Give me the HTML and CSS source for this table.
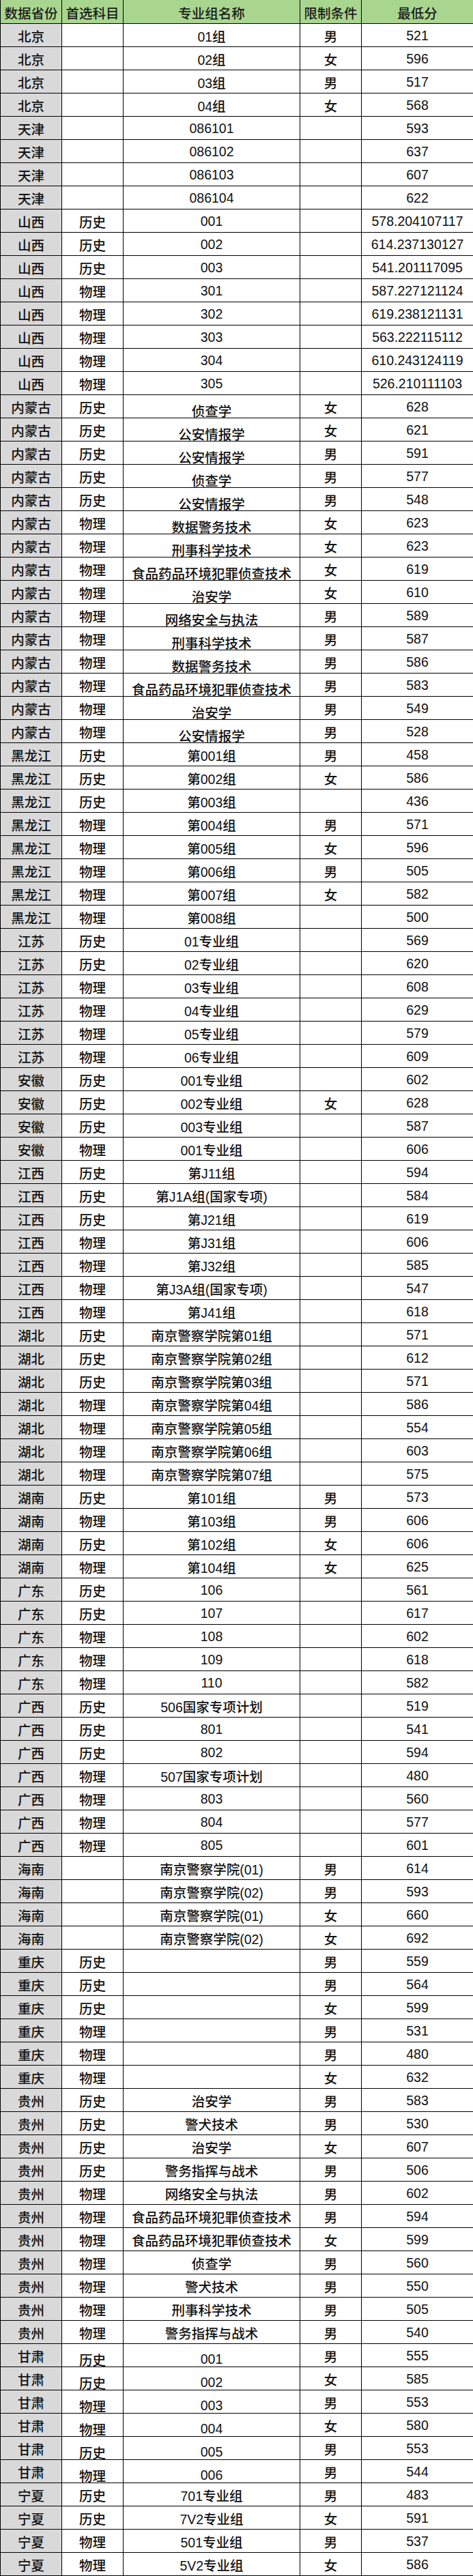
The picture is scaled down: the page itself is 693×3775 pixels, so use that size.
FILE: index.html
```html
<!DOCTYPE html>
<html lang="zh-CN">
<head>
<meta charset="utf-8">
<title>录取最低分</title>
<link rel="stylesheet" href="styles.css">
</head>
<body>
<div class="sheet">
<div class="c h">数据省份</div><div class="c h">首选科目</div><div class="c h">专业组名称</div><div class="c h">限制条件</div><div class="c h">最低分</div>

<div class="c p">北京</div><div class="c"></div><div class="c">01组</div><div class="c">男</div><div class="c">521</div>
<div class="c p">北京</div><div class="c"></div><div class="c">02组</div><div class="c">女</div><div class="c">596</div>
<div class="c p">北京</div><div class="c"></div><div class="c">03组</div><div class="c">男</div><div class="c">517</div>
<div class="c p">北京</div><div class="c"></div><div class="c">04组</div><div class="c">女</div><div class="c">568</div>
<div class="c p">天津</div><div class="c"></div><div class="c">086101</div><div class="c"></div><div class="c">593</div>
<div class="c p">天津</div><div class="c"></div><div class="c">086102</div><div class="c"></div><div class="c">637</div>
<div class="c p">天津</div><div class="c"></div><div class="c">086103</div><div class="c"></div><div class="c">607</div>
<div class="c p">天津</div><div class="c"></div><div class="c">086104</div><div class="c"></div><div class="c">622</div>
<div class="c p">山西</div><div class="c">历史</div><div class="c">001</div><div class="c"></div><div class="c">578.204107117</div>
<div class="c p">山西</div><div class="c">历史</div><div class="c">002</div><div class="c"></div><div class="c">614.237130127</div>
<div class="c p">山西</div><div class="c">历史</div><div class="c">003</div><div class="c"></div><div class="c">541.201117095</div>
<div class="c p">山西</div><div class="c">物理</div><div class="c">301</div><div class="c"></div><div class="c">587.227121124</div>
<div class="c p">山西</div><div class="c">物理</div><div class="c">302</div><div class="c"></div><div class="c">619.238121131</div>
<div class="c p">山西</div><div class="c">物理</div><div class="c">303</div><div class="c"></div><div class="c">563.222115112</div>
<div class="c p">山西</div><div class="c">物理</div><div class="c">304</div><div class="c"></div><div class="c">610.243124119</div>
<div class="c p">山西</div><div class="c">物理</div><div class="c">305</div><div class="c"></div><div class="c">526.210111103</div>

<div class="c p">内蒙古</div><div class="c">历史</div><div class="c low">侦查学</div><div class="c">女</div><div class="c">628</div>
<div class="c p">内蒙古</div><div class="c">历史</div><div class="c low">公安情报学</div><div class="c">女</div><div class="c">621</div>
<div class="c p">内蒙古</div><div class="c">历史</div><div class="c low">公安情报学</div><div class="c">男</div><div class="c">591</div>
<div class="c p">内蒙古</div><div class="c">历史</div><div class="c low">侦查学</div><div class="c">男</div><div class="c">577</div>
<div class="c p">内蒙古</div><div class="c">历史</div><div class="c low">公安情报学</div><div class="c">男</div><div class="c">548</div>
<div class="c p">内蒙古</div><div class="c">物理</div><div class="c low">数据警务技术</div><div class="c">女</div><div class="c">623</div>
<div class="c p">内蒙古</div><div class="c">物理</div><div class="c low">刑事科学技术</div><div class="c">女</div><div class="c">623</div>
<div class="c p">内蒙古</div><div class="c">物理</div><div class="c low">食品药品环境犯罪侦查技术</div><div class="c">女</div><div class="c">619</div>
<div class="c p">内蒙古</div><div class="c">物理</div><div class="c low">治安学</div><div class="c">女</div><div class="c">610</div>
<div class="c p">内蒙古</div><div class="c">物理</div><div class="c low">网络安全与执法</div><div class="c">男</div><div class="c">589</div>
<div class="c p">内蒙古</div><div class="c">物理</div><div class="c low">刑事科学技术</div><div class="c">男</div><div class="c">587</div>
<div class="c p">内蒙古</div><div class="c">物理</div><div class="c low">数据警务技术</div><div class="c">男</div><div class="c">586</div>
<div class="c p">内蒙古</div><div class="c">物理</div><div class="c low">食品药品环境犯罪侦查技术</div><div class="c">男</div><div class="c">583</div>
<div class="c p">内蒙古</div><div class="c">物理</div><div class="c low">治安学</div><div class="c">男</div><div class="c">549</div>
<div class="c p">内蒙古</div><div class="c">物理</div><div class="c low">公安情报学</div><div class="c">男</div><div class="c">528</div>

<div class="c p">黑龙江</div><div class="c">历史</div><div class="c">第001组</div><div class="c">男</div><div class="c">458</div>
<div class="c p">黑龙江</div><div class="c">历史</div><div class="c">第002组</div><div class="c">女</div><div class="c">586</div>
<div class="c p">黑龙江</div><div class="c">历史</div><div class="c">第003组</div><div class="c"></div><div class="c">436</div>
<div class="c p">黑龙江</div><div class="c">物理</div><div class="c">第004组</div><div class="c">男</div><div class="c">571</div>
<div class="c p">黑龙江</div><div class="c">物理</div><div class="c">第005组</div><div class="c">女</div><div class="c">596</div>
<div class="c p">黑龙江</div><div class="c">物理</div><div class="c">第006组</div><div class="c">男</div><div class="c">505</div>
<div class="c p">黑龙江</div><div class="c">物理</div><div class="c">第007组</div><div class="c">女</div><div class="c">582</div>
<div class="c p">黑龙江</div><div class="c">物理</div><div class="c">第008组</div><div class="c"></div><div class="c">500</div>

<div class="c p">江苏</div><div class="c">历史</div><div class="c">01专业组</div><div class="c"></div><div class="c">569</div>
<div class="c p">江苏</div><div class="c">历史</div><div class="c">02专业组</div><div class="c"></div><div class="c">620</div>
<div class="c p">江苏</div><div class="c">物理</div><div class="c">03专业组</div><div class="c"></div><div class="c">608</div>
<div class="c p">江苏</div><div class="c">物理</div><div class="c">04专业组</div><div class="c"></div><div class="c">629</div>
<div class="c p">江苏</div><div class="c">物理</div><div class="c">05专业组</div><div class="c"></div><div class="c">579</div>
<div class="c p">江苏</div><div class="c">物理</div><div class="c">06专业组</div><div class="c"></div><div class="c">609</div>

<div class="c p">安徽</div><div class="c">历史</div><div class="c">001专业组</div><div class="c"></div><div class="c">602</div>
<div class="c p">安徽</div><div class="c">历史</div><div class="c">002专业组</div><div class="c">女</div><div class="c">628</div>
<div class="c p">安徽</div><div class="c">历史</div><div class="c">003专业组</div><div class="c"></div><div class="c">587</div>
<div class="c p">安徽</div><div class="c">物理</div><div class="c">001专业组</div><div class="c"></div><div class="c">606</div>

<div class="c p">江西</div><div class="c">历史</div><div class="c">第J11组</div><div class="c"></div><div class="c">594</div>
<div class="c p">江西</div><div class="c">历史</div><div class="c">第J1A组(国家专项)</div><div class="c"></div><div class="c">584</div>
<div class="c p">江西</div><div class="c">历史</div><div class="c">第J21组</div><div class="c"></div><div class="c">619</div>
<div class="c p">江西</div><div class="c">物理</div><div class="c">第J31组</div><div class="c"></div><div class="c">606</div>
<div class="c p">江西</div><div class="c">物理</div><div class="c">第J32组</div><div class="c"></div><div class="c">585</div>
<div class="c p">江西</div><div class="c">物理</div><div class="c">第J3A组(国家专项)</div><div class="c"></div><div class="c">547</div>
<div class="c p">江西</div><div class="c">物理</div><div class="c">第J41组</div><div class="c"></div><div class="c">618</div>

<div class="c p">湖北</div><div class="c">历史</div><div class="c">南京警察学院第01组</div><div class="c"></div><div class="c">571</div>
<div class="c p">湖北</div><div class="c">历史</div><div class="c">南京警察学院第02组</div><div class="c"></div><div class="c">612</div>
<div class="c p">湖北</div><div class="c">历史</div><div class="c">南京警察学院第03组</div><div class="c"></div><div class="c">571</div>
<div class="c p">湖北</div><div class="c">物理</div><div class="c">南京警察学院第04组</div><div class="c"></div><div class="c">586</div>
<div class="c p">湖北</div><div class="c">物理</div><div class="c">南京警察学院第05组</div><div class="c"></div><div class="c">554</div>
<div class="c p">湖北</div><div class="c">物理</div><div class="c">南京警察学院第06组</div><div class="c"></div><div class="c">603</div>
<div class="c p">湖北</div><div class="c">物理</div><div class="c">南京警察学院第07组</div><div class="c"></div><div class="c">575</div>

<div class="c p">湖南</div><div class="c">历史</div><div class="c">第101组</div><div class="c">男</div><div class="c">573</div>
<div class="c p">湖南</div><div class="c">物理</div><div class="c">第103组</div><div class="c">男</div><div class="c">606</div>
<div class="c p">湖南</div><div class="c">历史</div><div class="c">第102组</div><div class="c">女</div><div class="c">606</div>
<div class="c p">湖南</div><div class="c">物理</div><div class="c">第104组</div><div class="c">女</div><div class="c">625</div>

<div class="c p">广东</div><div class="c">历史</div><div class="c">106</div><div class="c"></div><div class="c">561</div>
<div class="c p">广东</div><div class="c">历史</div><div class="c">107</div><div class="c"></div><div class="c">617</div>
<div class="c p">广东</div><div class="c">物理</div><div class="c">108</div><div class="c"></div><div class="c">602</div>
<div class="c p">广东</div><div class="c">物理</div><div class="c">109</div><div class="c"></div><div class="c">618</div>
<div class="c p">广东</div><div class="c">物理</div><div class="c">110</div><div class="c"></div><div class="c">582</div>

<div class="c p">广西</div><div class="c">历史</div><div class="c">506国家专项计划</div><div class="c"></div><div class="c">519</div>
<div class="c p">广西</div><div class="c">历史</div><div class="c">801</div><div class="c"></div><div class="c">541</div>
<div class="c p">广西</div><div class="c">历史</div><div class="c">802</div><div class="c"></div><div class="c">594</div>
<div class="c p">广西</div><div class="c">物理</div><div class="c">507国家专项计划</div><div class="c"></div><div class="c">480</div>
<div class="c p">广西</div><div class="c">物理</div><div class="c">803</div><div class="c"></div><div class="c">560</div>
<div class="c p">广西</div><div class="c">物理</div><div class="c">804</div><div class="c"></div><div class="c">577</div>
<div class="c p">广西</div><div class="c">物理</div><div class="c">805</div><div class="c"></div><div class="c">601</div>

<div class="c p">海南</div><div class="c"></div><div class="c">南京警察学院(01)</div><div class="c">男</div><div class="c">614</div>
<div class="c p">海南</div><div class="c"></div><div class="c">南京警察学院(02)</div><div class="c">男</div><div class="c">593</div>
<div class="c p">海南</div><div class="c"></div><div class="c">南京警察学院(01)</div><div class="c">女</div><div class="c">660</div>
<div class="c p">海南</div><div class="c"></div><div class="c">南京警察学院(02)</div><div class="c">女</div><div class="c">692</div>

<div class="c p">重庆</div><div class="c">历史</div><div class="c"></div><div class="c">男</div><div class="c">559</div>
<div class="c p">重庆</div><div class="c">历史</div><div class="c"></div><div class="c">男</div><div class="c">564</div>
<div class="c p">重庆</div><div class="c">历史</div><div class="c"></div><div class="c">女</div><div class="c">599</div>
<div class="c p">重庆</div><div class="c">物理</div><div class="c"></div><div class="c">男</div><div class="c">531</div>
<div class="c p">重庆</div><div class="c">物理</div><div class="c"></div><div class="c">男</div><div class="c">480</div>
<div class="c p">重庆</div><div class="c">物理</div><div class="c"></div><div class="c">女</div><div class="c">632</div>

<div class="c p">贵州</div><div class="c">历史</div><div class="c">治安学</div><div class="c">男</div><div class="c">583</div>
<div class="c p">贵州</div><div class="c">历史</div><div class="c">警犬技术</div><div class="c">男</div><div class="c">530</div>
<div class="c p">贵州</div><div class="c">历史</div><div class="c">治安学</div><div class="c">女</div><div class="c">607</div>
<div class="c p">贵州</div><div class="c">历史</div><div class="c">警务指挥与战术</div><div class="c">男</div><div class="c">506</div>
<div class="c p">贵州</div><div class="c">物理</div><div class="c">网络安全与执法</div><div class="c">男</div><div class="c">602</div>
<div class="c p">贵州</div><div class="c">物理</div><div class="c">食品药品环境犯罪侦查技术</div><div class="c">男</div><div class="c">594</div>
<div class="c p">贵州</div><div class="c">物理</div><div class="c">食品药品环境犯罪侦查技术</div><div class="c">女</div><div class="c">599</div>
<div class="c p">贵州</div><div class="c">物理</div><div class="c">侦查学</div><div class="c">男</div><div class="c">560</div>
<div class="c p">贵州</div><div class="c">物理</div><div class="c">警犬技术</div><div class="c">男</div><div class="c">550</div>
<div class="c p">贵州</div><div class="c">物理</div><div class="c">刑事科学技术</div><div class="c">男</div><div class="c">505</div>
<div class="c p">贵州</div><div class="c">物理</div><div class="c">警务指挥与战术</div><div class="c">男</div><div class="c">540</div>

<div class="c p">甘肃</div><div class="c low">历史</div><div class="c low">001</div><div class="c">男</div><div class="c">555</div>
<div class="c p">甘肃</div><div class="c low">历史</div><div class="c low">002</div><div class="c">女</div><div class="c">585</div>
<div class="c p">甘肃</div><div class="c low">物理</div><div class="c low">003</div><div class="c">男</div><div class="c">553</div>
<div class="c p">甘肃</div><div class="c low">物理</div><div class="c low">004</div><div class="c">女</div><div class="c">580</div>
<div class="c p">甘肃</div><div class="c low">历史</div><div class="c low">005</div><div class="c">男</div><div class="c">553</div>
<div class="c p">甘肃</div><div class="c low">物理</div><div class="c low">006</div><div class="c">男</div><div class="c">544</div>

<div class="c p">宁夏</div><div class="c">历史</div><div class="c">701专业组</div><div class="c">男</div><div class="c">483</div>
<div class="c p">宁夏</div><div class="c">历史</div><div class="c">7V2专业组</div><div class="c">女</div><div class="c">591</div>
<div class="c p">宁夏</div><div class="c">物理</div><div class="c">501专业组</div><div class="c">男</div><div class="c">537</div>
<div class="c p">宁夏</div><div class="c">物理</div><div class="c">5V2专业组</div><div class="c">女</div><div class="c">586</div>
</div>
</body>
</html>
```

FILE: styles.css
```css
html, body {
  margin: 0;
  padding: 0;
  background: #ffffff;
}

.sheet {
  display: grid;
  grid-template-columns: 89px 89px 258px 89px 163px;
  grid-template-rows: 34px;
  grid-auto-rows: 33px;
  gap: 1px;
  padding: 0 0 1px 1px;
  width: 693px;
  box-sizing: border-box;
  background: #000000;
  font-family: "Liberation Sans", "Noto Sans CJK SC", sans-serif;
  font-size: 19.5px;
  font-weight: 500;
  color: #111111;
}

.c {
  display: flex;
  align-items: center;
  justify-content: center;
  background: #ffffff;
  white-space: nowrap;
  overflow: hidden;
  padding-top: 2px;
  box-sizing: border-box;
}

.h {
  background: #a9d68e;
  color: #1a1a1a;
}

.p {
  background: #d9d9d9;
}

.low {
  padding-top: 11px;
}
```
